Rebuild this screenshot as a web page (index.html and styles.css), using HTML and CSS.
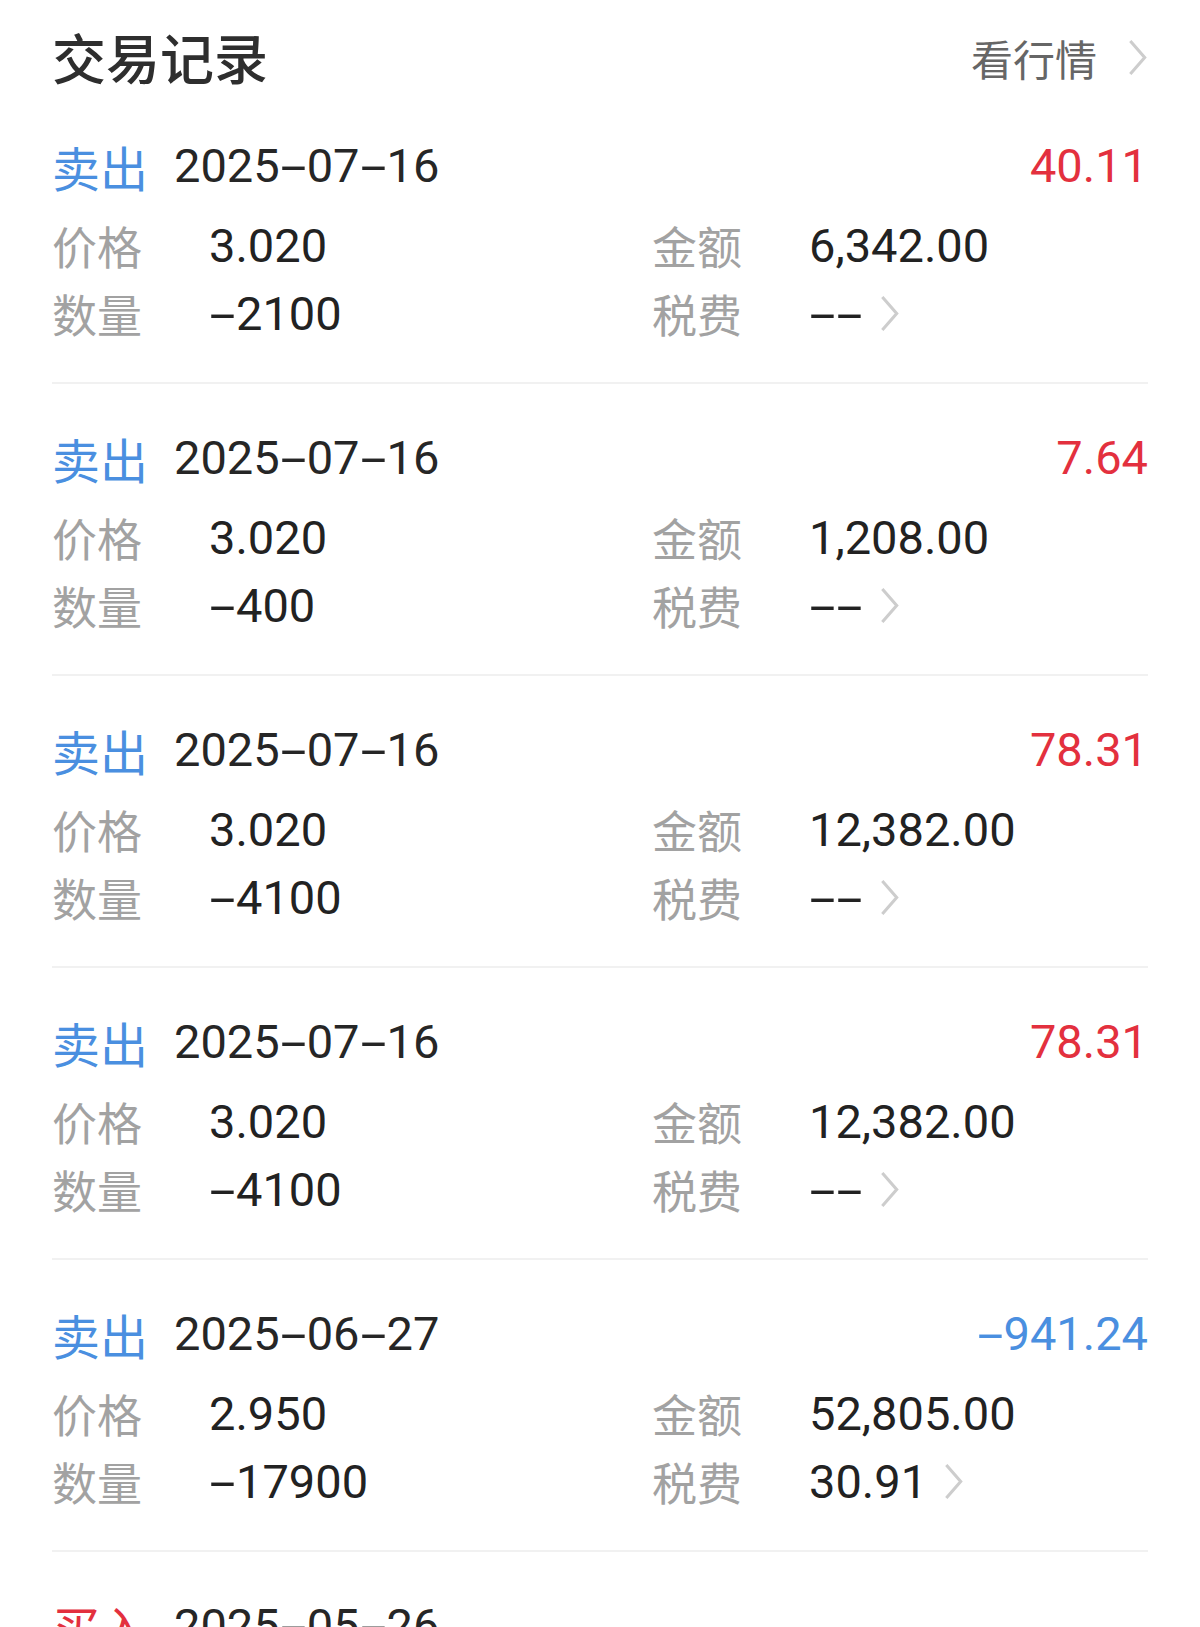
FILE: index.html
```html
<!DOCTYPE html>
<html lang="zh-CN">
<head>
    <meta charset="UTF-8">
    <meta name="viewport" content="width=device-width, initial-scale=1.0">
    <title>交易记录</title>
    <link rel="stylesheet" href="styles.css">
</head>
<body>
    <div class="records">
        <div class="records-head">
            <h2>交易记录</h2>
            <a class="more" href="#">看行情<svg class="chevron" viewBox="0 0 20 36"><polyline points="3,2 17,18 3,34"/></svg></a>
        </div>

        <div class="trade">
            <div class="trade-head">
                <span class="side sell">卖出</span>
                <span class="date">2025<i class="dash">-</i>07<i class="dash">-</i>16</span>
                <span class="profit up">40.11</span>
            </div>
            <div class="trade-grid">
                <span class="label">价格</span><span class="value">3.020</span>
                <span class="label">金额</span><span class="value">6,342.00</span>
                <span class="label">数量</span><span class="value"><i class="dash">-</i>2100</span>
                <span class="label">税费</span><span class="value"><i class="dash">-</i><i class="dash">-</i><svg class="chevron" viewBox="0 0 20 36"><polyline points="3,2 17,18 3,34"/></svg></span>
            </div>
        </div>

        <div class="trade">
            <div class="trade-head">
                <span class="side sell">卖出</span>
                <span class="date">2025<i class="dash">-</i>07<i class="dash">-</i>16</span>
                <span class="profit up">7.64</span>
            </div>
            <div class="trade-grid">
                <span class="label">价格</span><span class="value">3.020</span>
                <span class="label">金额</span><span class="value">1,208.00</span>
                <span class="label">数量</span><span class="value"><i class="dash">-</i>400</span>
                <span class="label">税费</span><span class="value"><i class="dash">-</i><i class="dash">-</i><svg class="chevron" viewBox="0 0 20 36"><polyline points="3,2 17,18 3,34"/></svg></span>
            </div>
        </div>

        <div class="trade">
            <div class="trade-head">
                <span class="side sell">卖出</span>
                <span class="date">2025<i class="dash">-</i>07<i class="dash">-</i>16</span>
                <span class="profit up">78.31</span>
            </div>
            <div class="trade-grid">
                <span class="label">价格</span><span class="value">3.020</span>
                <span class="label">金额</span><span class="value">12,382.00</span>
                <span class="label">数量</span><span class="value"><i class="dash">-</i>4100</span>
                <span class="label">税费</span><span class="value"><i class="dash">-</i><i class="dash">-</i><svg class="chevron" viewBox="0 0 20 36"><polyline points="3,2 17,18 3,34"/></svg></span>
            </div>
        </div>

        <div class="trade">
            <div class="trade-head">
                <span class="side sell">卖出</span>
                <span class="date">2025<i class="dash">-</i>07<i class="dash">-</i>16</span>
                <span class="profit up">78.31</span>
            </div>
            <div class="trade-grid">
                <span class="label">价格</span><span class="value">3.020</span>
                <span class="label">金额</span><span class="value">12,382.00</span>
                <span class="label">数量</span><span class="value"><i class="dash">-</i>4100</span>
                <span class="label">税费</span><span class="value"><i class="dash">-</i><i class="dash">-</i><svg class="chevron" viewBox="0 0 20 36"><polyline points="3,2 17,18 3,34"/></svg></span>
            </div>
        </div>

        <div class="trade">
            <div class="trade-head">
                <span class="side sell">卖出</span>
                <span class="date">2025<i class="dash">-</i>06<i class="dash">-</i>27</span>
                <span class="profit down"><i class="dash">-</i>941.24</span>
            </div>
            <div class="trade-grid">
                <span class="label">价格</span><span class="value">2.950</span>
                <span class="label">金额</span><span class="value">52,805.00</span>
                <span class="label">数量</span><span class="value"><i class="dash">-</i>17900</span>
                <span class="label">税费</span><span class="value">30.91<svg class="chevron" viewBox="0 0 20 36"><polyline points="3,2 17,18 3,34"/></svg></span>
            </div>
        </div>

        <div class="trade">
            <div class="trade-head">
                <span class="side buy">买入</span>
                <span class="date">2025<i class="dash">-</i>05<i class="dash">-</i>26</span>
            </div>
        </div>
    </div>
</body>
</html>
```

FILE: styles.css
```css
body {
    font-family: "Noto Sans CJK SC", sans-serif;
    background-color: #ffffff;
    margin: 0;
    padding: 0 52px;
    color: #222;
}
.records-head {
    display: flex;
    justify-content: space-between;
    align-items: center;
    padding-top: 22px;
    height: 70px;
}
.records-head h2 {
    margin: 0;
    font-size: 54px;
    font-weight: 500;
    line-height: 70px;
    color: #2e2e2e;
}
.more {
    display: flex;
    align-items: center;
    font-size: 42px;
    color: #666;
    text-decoration: none;
}
.chevron {
    width: 21px;
    height: 37px;
    fill: none;
    stroke: #cdcdcd;
    stroke-width: 3;
}
.more .chevron {
    margin-left: 30px;
}
.trade {
    padding: 44px 0 35px;
    border-bottom: 2px solid #f1f1f1;
}
.trade-head {
    display: flex;
    align-items: center;
    height: 60px;
}
.side {
    font-size: 48px;
    line-height: 60px;
}
.sell {
    color: #4a8fe0;
}
.buy {
    color: #e3303e;
}
.dash {
    display: inline-block;
    font-style: normal;
    margin: 0 7px;
    transform: scaleX(2);
}
.date {
    font-family: Roboto, "Noto Sans CJK SC", sans-serif;
    font-size: 47px;
    line-height: 60px;
    margin-left: 26px;
    color: #262626;
}
.profit {
    margin-left: auto;
    font-family: Roboto, "Noto Sans CJK SC", sans-serif;
    font-size: 47px;
    line-height: 60px;
}
.profit.up {
    color: #e3303e;
}
.profit.down {
    color: #4a8fe0;
}
.trade-grid {
    display: grid;
    grid-template-columns: 157px 443px 157px 1fr;
    grid-auto-rows: 68px;
    align-items: center;
    margin-top: 15px;
}
.label {
    font-size: 45px;
    color: #a2a2a2;
}
.value {
    display: flex;
    align-items: center;
    font-family: Roboto, "Noto Sans CJK SC", sans-serif;
    font-size: 47px;
    color: #222;
}
.value .chevron {
    margin-left: 16px;
}
```
